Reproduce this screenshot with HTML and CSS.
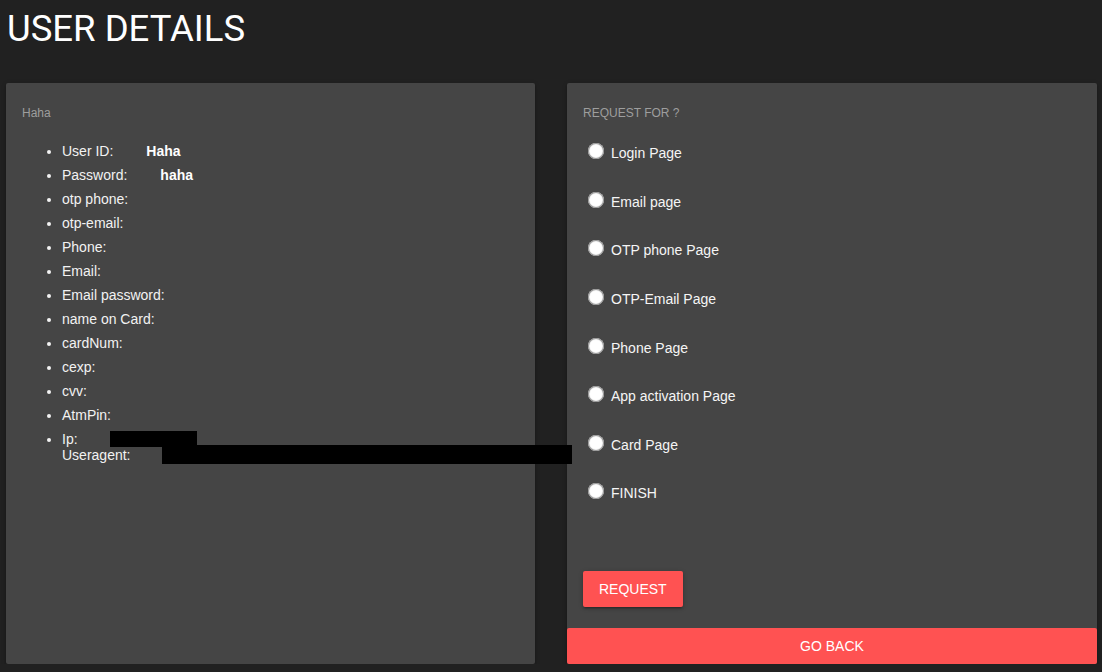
FILE: index.html
```html
<!DOCTYPE html>
<html lang="en">
<head>
<meta charset="utf-8">
<title>User Details</title>
<link rel="stylesheet" href="styles.css">
</head>
<body>
<h1 class="page-title">USER DETAILS</h1>
<div class="cards">
  <section class="card card-info">
    <p class="card-label">Haha</p>
    <ul class="details">
      <li>User ID:<b class="val">Haha</b></li>
      <li>Password:<b class="val">haha</b></li>
      <li>otp phone:</li>
      <li>otp-email:</li>
      <li>Phone:</li>
      <li>Email:</li>
      <li>Email password:</li>
      <li>name on Card:</li>
      <li>cardNum:</li>
      <li>cexp:</li>
      <li>cvv:</li>
      <li>AtmPin:</li>
      <li>Ip:<span class="redact redact-ip"></span><br>Useragent:<span class="redact redact-ua"></span></li>
    </ul>
  </section>
  <section class="card card-request">
    <p class="card-label">REQUEST FOR ?</p>
    <div class="options">
      <label class="option"><input type="radio" name="page" class="dot"><span>Login Page</span></label>
      <label class="option"><input type="radio" name="page" class="dot"><span>Email page</span></label>
      <label class="option"><input type="radio" name="page" class="dot"><span>OTP phone Page</span></label>
      <label class="option"><input type="radio" name="page" class="dot"><span>OTP-Email Page</span></label>
      <label class="option"><input type="radio" name="page" class="dot"><span>Phone Page</span></label>
      <label class="option"><input type="radio" name="page" class="dot"><span>App activation Page</span></label>
      <label class="option"><input type="radio" name="page" class="dot"><span>Card Page</span></label>
      <label class="option"><input type="radio" name="page" class="dot"><span>FINISH</span></label>
    </div>
    <div class="actions">
      <button class="btn btn-request" type="button">REQUEST</button>
    </div>
    <button class="btn btn-back" type="button">GO BACK</button>
  </section>
</div>
</body>
</html>
```
FILE: styles.css
```css
html, body {
  margin: 0;
  padding: 0;
  background: #212121;
}

body {
  padding: 0 5px 0 6px;
  font-family: "Liberation Sans", Arial, sans-serif;
  font-size: 14px;
  color: #fff;
}

.page-title {
  margin: 8px 0 0 0;
  padding-left: 1px;
  font-family: Roboto, "Liberation Sans", sans-serif;
  font-weight: 400;
  font-size: 36.5px;
  line-height: 42px;
  color: #fff;
}

.cards {
  display: flex;
  gap: 32px;
  margin-top: 33px;
}

.card {
  background: #454545;
  border-radius: 2px;
  box-shadow: 0 2px 2px 0 rgba(0,0,0,.14), 0 3px 1px -2px rgba(0,0,0,.12), 0 1px 5px 0 rgba(0,0,0,.2);
}

.card-info {
  width: 529px;
  padding: 22px 16px 0 16px;
  box-sizing: border-box;
}

.card-request {
  width: 530px;
  padding-top: 22px;
  display: flex;
  flex-direction: column;
  box-sizing: border-box;
}

.card-label {
  margin: 0;
  font-size: 12px;
  line-height: 16px;
  color: #9e9e9e;
}

.card-request .card-label {
  padding: 0 16px;
}

.details {
  margin: 22px 0 0 0;
  padding-left: 40px;
  list-style: disc;
  color: #f2f2f2;
}

.details li {
  line-height: 16px;
  margin-bottom: 8px;
  white-space: nowrap;
}

.val {
  margin-left: 33px;
  color: #fff;
}

.redact {
  display: inline-block;
  background: #000;
  margin-left: 32px;
  position: relative;
}

.redact-ip {
  width: 87px;
  height: 16px;
  vertical-align: top;
}

.redact-ua {
  width: 410px;
  height: 19px;
  margin-top: -3px;
  margin-bottom: -1px;
  vertical-align: -3px;
}

.options {
  margin-top: 8px;
  padding: 0 16px 0 21px;
}

.option {
  display: flex;
  align-items: center;
  gap: 7px;
  height: 48.57px;
  color: #f5f5f5;
  cursor: pointer;
}

.dot {
  appearance: none;
  -webkit-appearance: none;
  margin: 0 0 4px 0;
  width: 16px;
  height: 16px;
  border-radius: 50%;
  background: #fff;
  box-shadow: inset 0 0 1px 1px #8a8a8a;
  flex: none;
}

.actions {
  display: flex;
  padding: 53.5px 16px 0 16px;
}

.btn {
  border: none;
  font-family: "Liberation Sans", Arial, sans-serif;
  font-size: 14px;
  color: #fff;
  background: #ff5252;
  height: 36px;
  line-height: 36px;
  border-radius: 2px;
  cursor: pointer;
}

.btn-request {
  padding: 0 16px;
  box-shadow: 0 2px 2px 0 rgba(0,0,0,.14), 0 3px 1px -2px rgba(0,0,0,.12), 0 1px 5px 0 rgba(0,0,0,.2);
}

.btn-back {
  display: block;
  width: 100%;
  margin-top: 20.5px;
  padding: 0;
}
```
